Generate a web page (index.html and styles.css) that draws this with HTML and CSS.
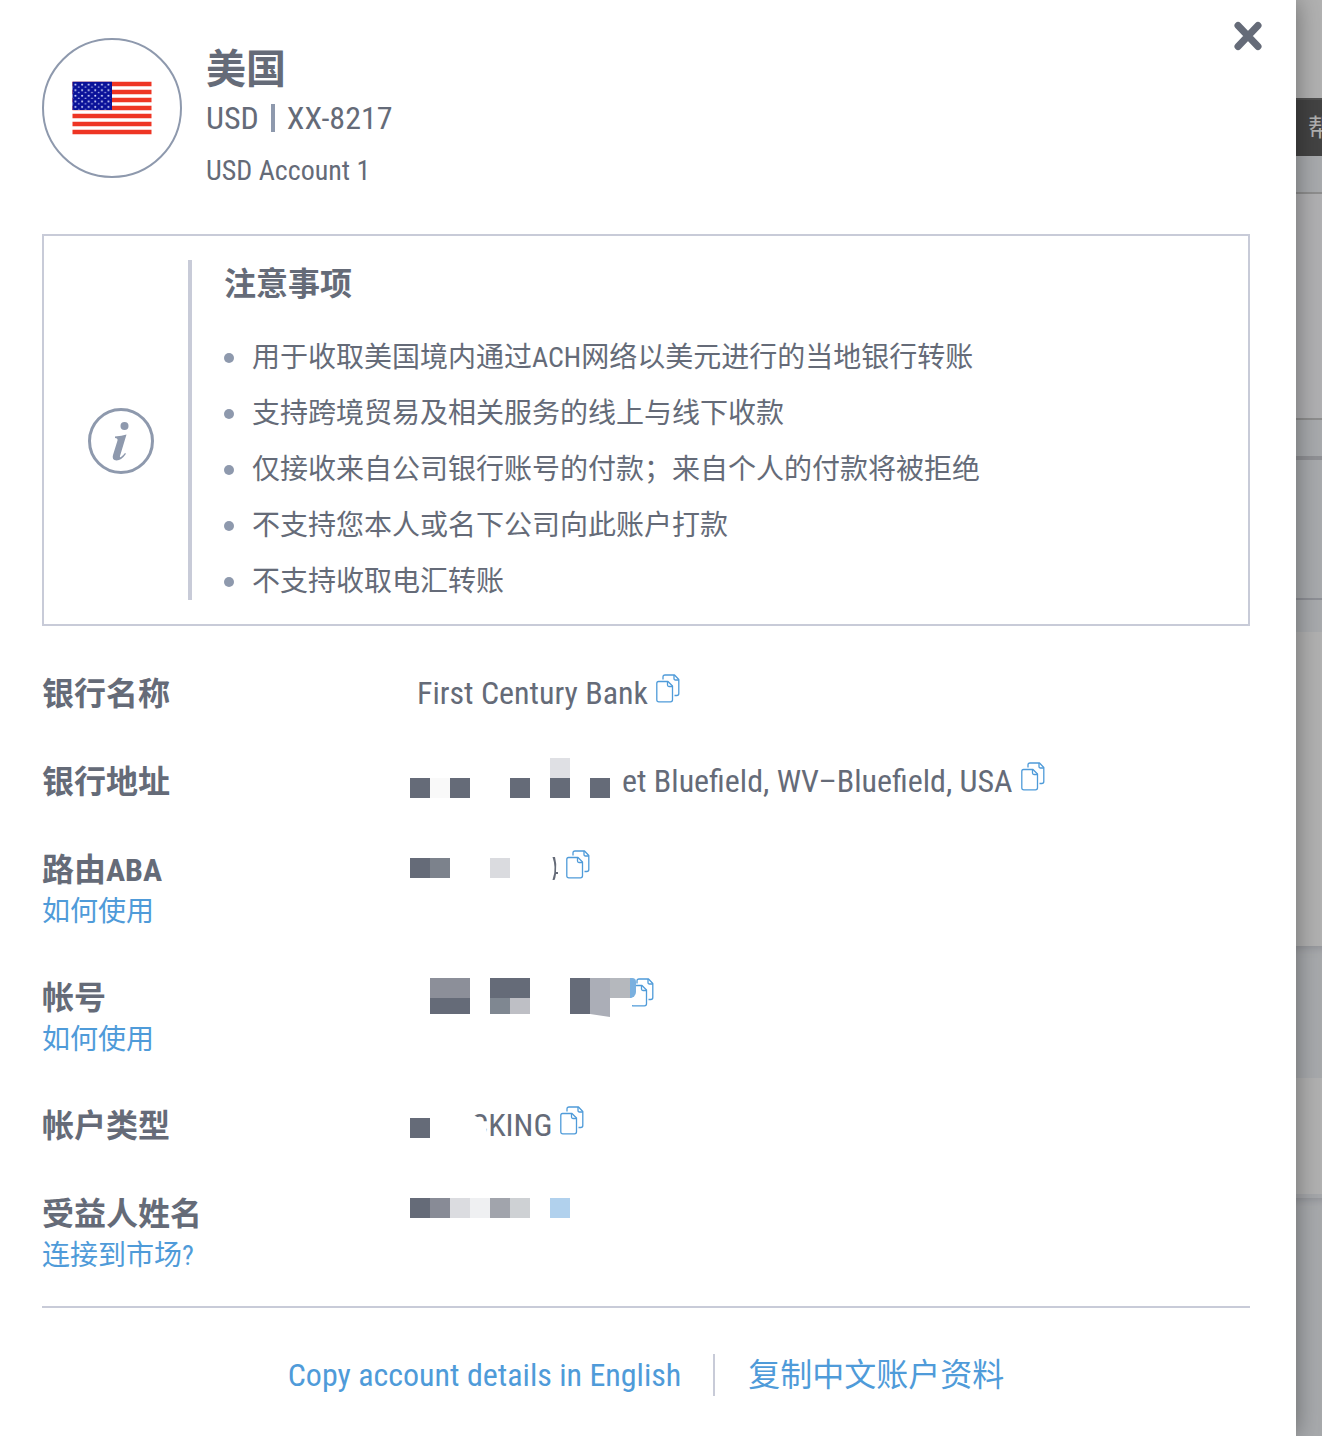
FILE: index.html
```html
<!DOCTYPE html>
<html lang="zh-CN">
<head>
<meta charset="utf-8">
<meta name="viewport" content="width=device-width, initial-scale=1">
<title>美国 USD</title>
<link rel="stylesheet" href="styles.css">
</head>
<body>
<svg class="defs" aria-hidden="true">
  <symbol id="copy" viewBox="0 0 24 30">
    <g fill="none" stroke="#4f9bd9" stroke-width="1.3" stroke-linejoin="round">
      <path d="M7 5.500V3Q7 1 9 1H18.500L22.800 5.500V19.500Q22.800 21.500 20.800 21.500H18.500"/>
      <path d="M18 1V4.500Q18 6 19.500 6H22.800"/>
      <path d="M2.500 7.500H12L16.500 12V25.800Q16.500 27.800 14.500 27.800H2.800Q.8 27.800 .8 25.800V9.500Q.8 7.500 2.500 7.500Z"/>
      <path d="M11.500 7.500V11Q11.500 12.500 13 12.500H16.500"/>
    </g>
  </symbol>
</svg>
<div class="screen">
  <main class="panel">
    <button class="close" type="button" aria-label="关闭">
      <svg width="28" height="30" viewBox="0 0 28 30"><path d="M4 4.500L24 25.500M24 4.500L4 25.500" stroke="#656b78" stroke-width="7" stroke-linecap="round"/></svg>
    </button>

    <header class="account">
      <div class="flag">
        <svg width="80" height="54" viewBox="0 0 80 54">
          <defs>
            <pattern id="stars" width="6.600" height="5.600" patternUnits="userSpaceOnUse" x="0.500" y="1">
              <circle cx="3" cy="2.600" r="1" fill="#dfe3ff"/><circle cx="6.300" cy="5.300" r=".9" fill="#c3c9f5"/><circle cx="-.3" cy="5.300" r=".9" fill="#c3c9f5"/>
            </pattern>
          </defs>
          <path d="M0.500 3H79.500M0.500 11H79.500M0.500 19H79.500M0.500 27H79.500M0.500 35H79.500M0.500 43H79.500M0.500 51H79.500" stroke="#ee3524" stroke-width="4.500"/>
          <path d="M0.500 0.800H40V29H0.500Z" fill="#0a1199"/>
          <path d="M1 1.500H39V28.500H1Z" fill="url(#stars)"/>
        </svg>
      </div>
      <div class="summary">
        <h1>美国</h1>
        <p class="number"><span>USD</span><i class="bar"></i><span>XX-8217</span></p>
        <p class="name">USD Account 1</p>
      </div>
    </header>

    <section class="notice">
      <div class="notice-icon">
        <svg width="66" height="66" viewBox="0 0 66 66" aria-hidden="true">
          <circle cx="33" cy="33" r="31.500" fill="none" stroke="#8e99ad" stroke-width="3"/>
          <circle cx="36.500" cy="18" r="4" fill="#8e99ad"/>
          <path d="M27 28.500Q34 28 38.500 26.500L32 48Q31.500 50 33 49Q35 47.500 37 45L38 45.800Q33.500 52.500 28.500 52.500Q23.500 52 25 47L29.500 32.500Q30 30 27 30Z" fill="#8e99ad"/>
        </svg>
      </div>
      <div class="notice-body">
        <h2>注意事项</h2>
        <ul>
          <li>用于收取美国境内通过ACH网络以美元进行的当地银行转账</li>
          <li>支持跨境贸易及相关服务的线上与线下收款</li>
          <li>仅接收来自公司银行账号的付款；来自个人的付款将被拒绝</li>
          <li>不支持您本人或名下公司向此账户打款</li>
          <li>不支持收取电汇转账</li>
        </ul>
      </div>
    </section>

    <dl class="details">
      <div class="row">
        <dt>银行名称</dt>
        <dd><span class="plain">First Century Bank</span><button class="copy" type="button" aria-label="复制银行名称"><svg><use href="#copy"/></svg></button></dd>
      </div>
      <div class="row">
        <dt>银行地址</dt>
        <dd>
          <svg class="mosaic" width="212" height="44"><path fill="#656b78" d="M0 19h20v20H0zM40 19h20v20H40zM100 19h20v20h-20zM140 19h20v20h-20zM180 19h20v20h-20z"/><path fill="#f9f9f9" d="M20 19h20v20H20z"/><path fill="#dfe0e4" d="M140-1h20v20h-20z"/></svg>
          <span>et Bluefield, WV–Bluefield, USA</span><button class="copy" type="button" aria-label="复制银行地址"><svg><use href="#copy"/></svg></button>
        </dd>
      </div>
      <div class="row">
        <dt>路由ABA<a href="#aba">如何使用</a></dt>
        <dd>
          <svg class="mosaic" width="148" height="44"><path fill="#656b78" d="M0 11h20v20H0z"/><path fill="#7c828c" d="M20 11h20v20H20z"/><path fill="#dadbdf" d="M80 11h20v20H80z"/><path fill="#656b78" d="M142.500 10h2.500q2 7 1 15h2v2h-2q-.5 4-1.500 6h-2q2.500-7 2-13t-2-10z"/></svg>
          <button class="copy" type="button" aria-label="复制路由ABA"><svg><use href="#copy"/></svg></button>
        </dd>
      </div>
      <div class="row">
        <dt>帐号<a href="#number">如何使用</a></dt>
        <dd>
          <svg class="mosaic" width="212" height="44"><path fill="#8c8f99" d="M20 3h40v20H20z"/><path fill="#656b78" d="M20 23h40v16H20zM80 3h40v20H80zM160 3h20v36h-20z"/><path fill="#7f8791" d="M80 23h20v16H80z"/><path fill="#bebfc5" d="M100 23h20v16h-20z"/><path fill="#abaeb7" d="M180 3h20v39l-20-3z"/><path fill="#b5b8bd" d="M200 3h20v20h-20z"/></svg>
          <button class="copy covered" type="button" aria-label="复制帐号"><svg><use href="#copy"/></svg></button>
        </dd>
      </div>
      <div class="row">
        <dt>帐户类型</dt>
        <dd>
          <svg class="mosaic" width="60" height="44"><path fill="#656b78" d="M0 15h20v20H0z"/></svg>
          <span class="clipped">CKING</span><button class="copy" type="button" aria-label="复制帐户类型"><svg><use href="#copy"/></svg></button>
        </dd>
      </div>
      <div class="row">
        <dt>受益人姓名<a href="#market">连接到市场?</a></dt>
        <dd>
          <svg class="mosaic" width="160" height="44"><path fill="#656b78" d="M0 7h20v20H0z"/><path fill="#888b96" d="M20 7h20v20H20z"/><path fill="#dbdce0" d="M40 7h20v20H40z"/><path fill="#eff0f2" d="M60 7h20v20H60z"/><path fill="#a1a4ac" d="M80 7h20v20H80z"/><path fill="#ced1d4" d="M100 7h20v20h-20z"/><path fill="#b1d1ed" d="M140 7h20v20h-20z"/></svg>
        </dd>
      </div>
    </dl>

    <footer class="actions">
      <a href="#en">Copy account details in English</a>
      <a href="#zh">复制中文账户资料</a>
    </footer>
  </main>

  <aside class="backdrop">
    <div class="top"></div>
    <div class="nav">帮</div>
    <div class="band b1"></div>
    <div class="band b2"></div>
    <div class="band b3"></div>
    <div class="band b4"></div>
    <div class="band b5"></div>
    <div class="band b6"></div>
    <div class="band b7"></div>
    <div class="band b8"></div>
    <div class="band rest"></div>
  </aside>
</div>
</body>
</html>
```
FILE: styles.css
```css
* { box-sizing: border-box; }

body {
  margin: 0;
  color: #656b78;
  background: #a7a9ac;
  font: 32px/44px "Roboto Condensed", "Liberation Sans Narrow", Roboto, "Noto Sans CJK SC", sans-serif;
}

h1, h2, p, ul, dl, dd { margin: 0; padding: 0; }
a { color: #4f9bd9; text-decoration: none; }
button { padding: 0; border: 0; background: none; cursor: pointer; }
svg { display: block; flex: none; }
.defs { position: absolute; width: 0; height: 0; }

.screen { display: flex; min-height: 100vh; }

.panel {
  position: relative;
  z-index: 1;
  flex: 1;
  min-width: 0;
  padding: 38px 46px 38px 42px;
  background: #fff;
  box-shadow: 0 0 24px rgba(0, 0, 0, .4);
}

.close { position: absolute; top: 21px; right: 34px; }

.account { display: flex; gap: 24px; }
.flag {
  display: grid;
  place-items: center;
  flex: none;
  width: 140px;
  height: 140px;
  border: 2px solid #8e99ad;
  border-radius: 50%;
}
h1 { font-size: 40px; line-height: 64px; }
.number { display: flex; align-items: center; gap: 12px; line-height: 32px; }
.bar { width: 4px; height: 28px; background: #8e99ad; }
.name { margin-top: 16px; font-size: 28px; line-height: 42px; }

.notice {
  display: flex;
  margin-top: 42px;
  padding: 24px 32px 24px 0;
  border: 2px solid #c8cbd8;
}
.notice-icon { display: grid; place-items: center; width: 144px; padding: 22px 0 0 10px; }
.notice-body { flex: 1; padding-left: 32px; border-left: 4px solid #c8cbd8; }
h2 { font-size: 32px; line-height: 48px; }
ul {
  display: grid;
  gap: 14px;
  margin: 29px 0 -3px;
  font-size: 28px;
  line-height: 42px;
  list-style: none;
}
li { display: flex; align-items: center; gap: 18px; }
li::before {
  content: "";
  flex: none;
  width: 10px;
  height: 10px;
  border-radius: 50%;
  background: #8e99ad;
}

.details { display: grid; gap: 43px; margin-top: 45px; }
.row { display: grid; grid-template-columns: 368px 1fr; }
dt { padding-top: 1px; font-weight: 700; }
dt a { display: block; font-size: 28px; font-weight: 400; line-height: 40px; }
dd { display: flex; height: 44px; white-space: nowrap; }
.plain { padding-left: 7px; }
.mosaic { overflow: visible; }
.copy { display: block; height: 30px; margin: 3px 0 0 8px; }
.copy svg { width: 24px; height: 30px; }

.covered { position: relative; }
.covered::before {
  content: "";
  position: absolute;
  top: 0;
  left: 0;
  width: 6px;
  height: 20px;
  background: #7ab0df;
  border-radius: 0 5px 8px 0;
}
.covered::after {
  content: "";
  position: absolute;
  top: 20px;
  left: 0;
  width: 2px;
  height: 10px;
  background: #fff;
}

.clipped { position: relative; }
.clipped::before {
  content: "";
  position: absolute;
  top: 12px;
  left: -1px;
  width: 18px;
  height: 28px;
  background: #fff;
  border-radius: 0 18px 0 0;
}

.actions {
  display: flex;
  justify-content: center;
  margin-top: 30px;
  padding-top: 46px;
  border-top: 2px solid #c8cbd8;
}
.actions a { line-height: 42px; }
.actions a + a { margin-left: 32px; padding-left: 33px; border-left: 2px solid #c8cbd8; }

.backdrop { display: flex; flex-direction: column; width: 26px; overflow: hidden; }
.top { height: 98px; background: #b1b1b1; }
.nav {
  height: 58px;
  padding-left: 12px;
  border-top: 2px solid #4f4f4f;
  color: #b1b1b1;
  background: #434343;
  font-size: 24px;
  line-height: 56px;
  white-space: nowrap;
}
.band { background: #a8aaad; }
.b1 { height: 36px; }
.b2 { height: 228px; border: solid #8e8e8e; border-width: 2px 0; background: #b0b0b2; }
.b3 { height: 36px; }
.b4 { height: 144px; border-top: 4px solid #909195; border-bottom: 2px solid #8e9096; }
.b5 { height: 32px; }
.b6 { height: 314px; background: #b1b1b1; }
.b7 { height: 132px; box-shadow: inset 0 8px 8px -6px #909196; }
.b8 { height: 120px; border-bottom: 4px solid #a5a7aa; background: #b1b1b1; }
.rest { flex: 1; box-shadow: inset 0 8px 8px -6px #909196; }
```
